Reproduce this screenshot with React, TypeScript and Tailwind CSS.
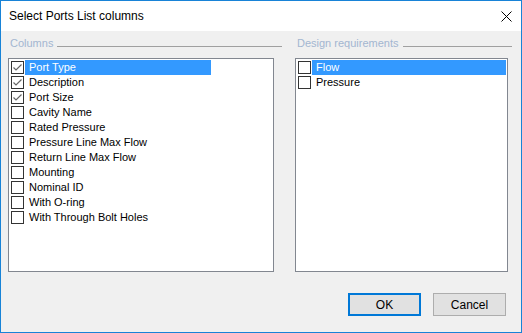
import React from 'react';

const columns = [
  { name: 'Port Type', checked: true, selected: true },
  { name: 'Description', checked: true },
  { name: 'Port Size', checked: true },
  { name: 'Cavity Name' },
  { name: 'Rated Pressure' },
  { name: 'Pressure Line Max Flow' },
  { name: 'Return Line Max Flow' },
  { name: 'Mounting' },
  { name: 'Nominal ID' },
  { name: 'With O-ring' },
  { name: 'With Through Bolt Holes' },
];

const requirements = [
  { name: 'Flow', selected: true },
  { name: 'Pressure' },
];

type Item = { name: string; checked?: boolean; selected?: boolean };

function CheckBox({ checked }: { checked?: boolean }) {
  return (
    <div className="w-[13px] h-[13px] border border-[#333333] bg-white flex items-center justify-center shrink-0">
      {checked && (
        <svg width="11" height="11" viewBox="0 0 11 11">
          <path d="M1.5 5.5 L4 8 L9.5 2.5" fill="none" stroke="#666666" strokeWidth="1.2" />
        </svg>
      )}
    </div>
  );
}

function Row({ item, wide }: { item: Item; wide?: boolean }) {
  return (
    <div className="h-[15px] flex items-center pl-[2px]">
      <CheckBox checked={item.checked} />
      <div
        className={`h-[15px] ml-px pl-[4px] flex items-center leading-[15px] ${
          wide ? 'flex-1 mr-px' : 'w-[186px]'
        } ${item.selected ? 'bg-[#3399ff] text-white' : 'text-black'}`}
      >
        {item.name}
      </div>
    </div>
  );
}

function GroupLabel({ text }: { text: string }) {
  return (
    <div className="h-[21px] flex items-start pl-[2px]">
      <span className="text-[11px] leading-[13px] text-[#a3b6d1]">{text}</span>
      <div className="flex-1 h-px bg-[#a0a0a0] mt-[9px] ml-[4px]" />
    </div>
  );
}

export default function App() {
  return (
    <div
      className="w-[522px] h-[333px] border border-[#1883d7] flex flex-col bg-[#f0f0f0]"
      style={{ fontFamily: '"Liberation Sans", Arial, sans-serif' }}
    >
      {/* Title bar */}
      <div className="h-[30px] bg-white flex items-center justify-between pl-[8px] pr-[9px]">
        <span className="text-[12px] text-black">Select Ports List columns</span>
        <svg width="11" height="11" viewBox="0 0 11 11">
          <path d="M0.5 0.5 L10.5 10.5 M10.5 0.5 L0.5 10.5" stroke="#000" strokeWidth="1" />
        </svg>
      </div>

      {/* Body */}
      <div className="flex-1 flex flex-col pt-[6px] pl-[7px]">
        <div className="flex gap-[13px]">
          <div className="w-[274px] flex flex-col">
            <GroupLabel text="Columns" />
            <div className="w-[266px] h-[214px] border border-[#828790] bg-white pt-px text-[11px]">
              {columns.map((c) => (
                <Row key={c.name} item={c} />
              ))}
            </div>
          </div>
          <div className="w-[217px] flex flex-col">
            <GroupLabel text="Design requirements" />
            <div className="w-[213px] h-[214px] border border-[#828790] bg-white pt-px text-[11px]">
              {requirements.map((r) => (
                <Row key={r.name} item={r} wide />
              ))}
            </div>
          </div>
        </div>

        {/* Buttons */}
        <div className="flex justify-end gap-[12px] mt-[21px] pr-[15px] text-[12px]">
          <button className="w-[73px] h-[23px] bg-[#e1e1e1] border-2 border-[#0078d7] text-black">
            OK
          </button>
          <button className="w-[73px] h-[23px] bg-[#e1e1e1] border border-[#adadad] text-black">
            Cancel
          </button>
        </div>
      </div>
    </div>
  );
}
